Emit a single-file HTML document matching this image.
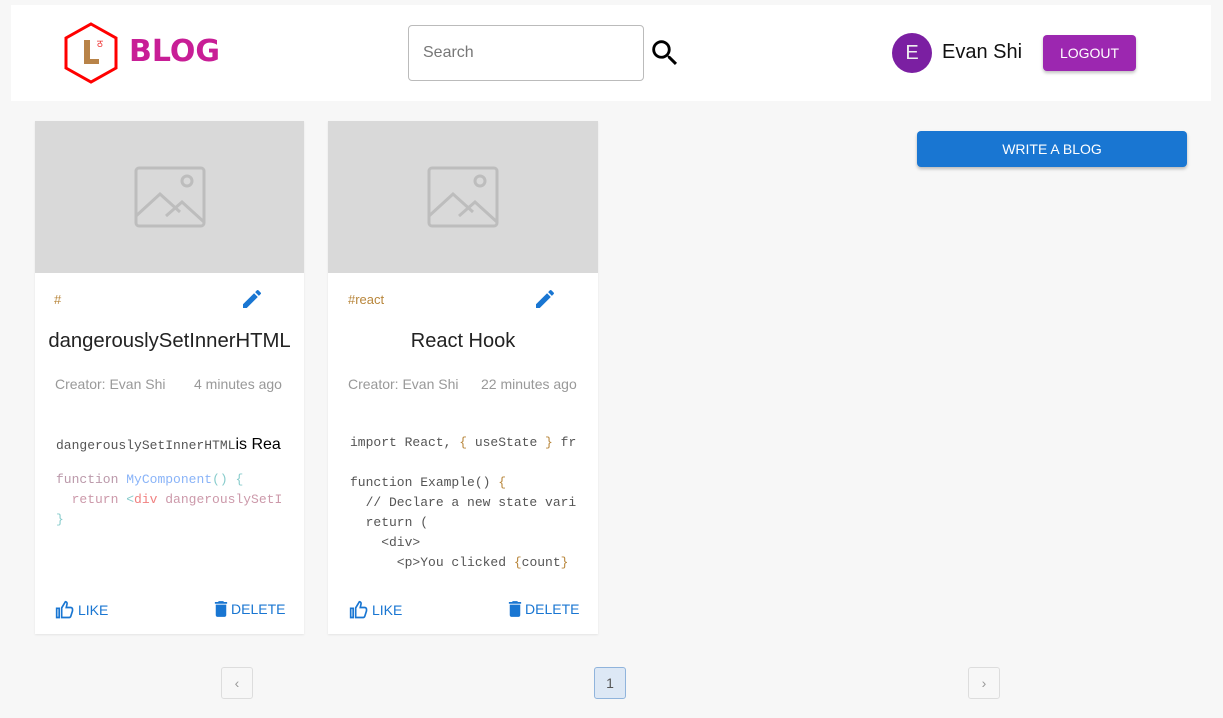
<!DOCTYPE html>
<html><head><style>
body{margin:0;background:#f7f7f7;font-family:"Liberation Sans",Arial,sans-serif;width:1223px;height:718px;position:relative;overflow:hidden}
.abs{position:absolute}
.hdr{left:11px;top:5px;width:1200px;height:96px;background:#fff}
.card{top:121px;height:513px;background:#fff;width:270px;box-shadow:0 1px 2px rgba(0,0,0,.08)}
.img{left:0;top:0;width:100%;height:152px;background:#d9d9d9}
.tag{font-size:13px;color:#b8863b}
.title{font-size:20px;color:#222;width:100%;text-align:center}
.meta{font-size:14px;color:#999}
pre{margin:0;font-family:"Liberation Mono",monospace;font-size:13px;line-height:20px;color:#555;overflow:hidden}
.act{font-size:14px;color:#1976d2;display:flex;align-items:center;gap:3px}
.pg{width:30px;height:30px;border:1px solid #ddd;border-radius:3px;top:667px;color:#999;font-size:14px;display:flex;align-items:center;justify-content:center;background:#f7f7f7}
</style></head><body>
<div class="abs hdr"></div>
<svg class="abs" style="left:63px;top:22px" width="56" height="62" viewBox="0 0 56 62"><polygon points="28,2 53,16 53,46 28,60 3,46 3,16" fill="none" stroke="#f00" stroke-width="3"/><path d="M21 18v24h15v-5h-9V18z" fill="#b88348"/><text x="34" y="25" font-size="10" fill="#e33">ठ</text></svg>
<div class="abs" style="left:129px;top:34px;font-size:30px;font-weight:bold;color:#c81e96;font-family:'DejaVu Sans',sans-serif;letter-spacing:0px">BLOG</div>
<div class="abs" style="left:408px;top:25px;width:236px;height:56px;border:1px solid #bbb;border-radius:4px;box-sizing:border-box;padding:18px 14px;font-size:16px;color:#777">Search</div>
<svg class="abs" style="left:648px;top:36px" width="34" height="34" viewBox="0 0 24 24"><path d="M15.5 14h-.79l-.28-.27A6.47 6.47 0 0016 9.5 6.5 6.5 0 109.5 16c1.61 0 3.09-.59 4.230-1.57l.27.28v.79l5 4.99L20.49 19l-4.99-5zm-6 0C7.01 14 5 11.990 5 9.5S7.01 5 9.5 5 14 7.01 14 9.5 11.99 14 9.5 14z"/></svg>
<div class="abs" style="left:892px;top:33px;width:40px;height:40px;border-radius:50%;background:#7b1fa2;color:#eee;font-size:20px;display:flex;align-items:center;justify-content:center">E</div>
<div class="abs" style="left:942px;top:41px;font-size:20px;color:#111">Evan Shi</div>
<div class="abs" style="left:1043px;top:35px;width:93px;height:36px;background:#9c27b0;color:#fff;border-radius:4px;font-size:14px;display:flex;align-items:center;justify-content:center;box-shadow:0 2px 3px rgba(0,0,0,.25)">LOGOUT</div>
<div class="abs" style="left:917px;top:131px;width:270px;height:36px;background:#1976d2;color:#fff;border-radius:4px;font-size:14px;display:flex;align-items:center;justify-content:center;box-shadow:0 2px 3px rgba(0,0,0,.25)">WRITE A BLOG</div>

<div class="abs card" style="left:35px;width:269px">
 <div class="abs img"><svg class="abs" style="left:99px;top:45px" width="72" height="62" viewBox="0 0 72 62"><rect x="2" y="2" width="68" height="58" rx="3" fill="none" stroke="#bdbdbd" stroke-width="3"/><circle cx="53" cy="15" r="5" fill="none" stroke="#bdbdbd" stroke-width="3"/><path d="M2 50l24-22 20 18M32 50l16-14 22 20" fill="none" stroke="#bdbdbd" stroke-width="3"/></svg></div>
 <div class="abs tag" style="left:19px;top:171px">#</div>
 <svg class="abs" style="left:205px;top:166px" width="24" height="24" viewBox="0 0 24 24"><path fill="#1976d2" d="M3 17.25V21h3.75L17.81 9.94l-3.75-3.75L3 17.25zM20.71 7.04a1 1 0 000-1.41l-2.34-2.34a1 1 0 00-1.41 0l-1.83 1.83 3.75 3.75 1.83-1.83z"/></svg>
 <div class="abs title" style="top:209px;font-size:20.3px">dangerouslySetInnerHTML</div>
 <div class="abs meta" style="left:20px;top:255px">Creator: Evan Shi</div>
 <div class="abs meta" style="left:159px;top:255px">4 minutes ago</div>
 <pre class="abs" style="left:21px;top:314px;width:228px"><span style="color:#555">dangerouslySetInnerHTML</span><span style="font-family:'Liberation Sans';font-size:16px;line-height:20px;color:#000">is Rea</span></pre>
 <pre class="abs" style="left:21px;top:349px;width:228px"><span style="color:#c9a"><span style="color:#b9a">function</span> <span style="color:#8ab4f8">MyComponent</span><span style="color:#8cc">() {</span>
  return <span style="color:#8cc">&lt;</span><span style="color:#f08080">div</span> dangerouslySetI
<span style="color:#8cc">}</span></span></pre>
 <div class="abs act" style="left:20px;top:479px"><svg width="20" height="20" viewBox="0 0 24 24"><path fill="none" stroke="#1976d2" stroke-width="2" d="M2 10h3v11H2zM8 21h9c1 0 1.6-.6 1.9-1.4l2.1-6.6V11c0-1-1-2-2-2h-5.5l1-4.5c.2-1-.7-2.5-2-2.5L8 9.5z"/></svg>LIKE</div>
 <div class="abs act" style="left:179px;top:479px"><svg width="14" height="18" viewBox="4 3 16 18"><path fill="#1976d2" d="M6 19c0 1.1.9 2 2 2h8c1.1 0 2-.9 2-2V7H6v12zM19 4h-3.5l-1-1h-5l-1 1H5v2h14V4z"/></svg>DELETE</div>
</div>

<div class="abs card" style="left:328px">
 <div class="abs img"><svg class="abs" style="left:99px;top:45px" width="72" height="62" viewBox="0 0 72 62"><rect x="2" y="2" width="68" height="58" rx="3" fill="none" stroke="#bdbdbd" stroke-width="3"/><circle cx="53" cy="15" r="5" fill="none" stroke="#bdbdbd" stroke-width="3"/><path d="M2 50l24-22 20 18M32 50l16-14 22 20" fill="none" stroke="#bdbdbd" stroke-width="3"/></svg></div>
 <div class="abs tag" style="left:20px;top:171px">#react</div>
 <svg class="abs" style="left:205px;top:166px" width="24" height="24" viewBox="0 0 24 24"><path fill="#1976d2" d="M3 17.25V21h3.75L17.81 9.94l-3.75-3.75L3 17.25zM20.71 7.04a1 1 0 000-1.41l-2.34-2.34a1 1 0 00-1.41 0l-1.83 1.83 3.75 3.75 1.83-1.83z"/></svg>
 <div class="abs title" style="top:209px">React Hook</div>
 <div class="abs meta" style="left:20px;top:255px">Creator: Evan Shi</div>
 <div class="abs meta" style="left:153px;top:255px">22 minutes ago</div>
 <pre class="abs" style="left:22px;top:312px;width:226px">import React, <span style="color:#b8863b">{</span> useState <span style="color:#b8863b">}</span> fr

function Example() <span style="color:#b8863b">{</span>
  // Declare a new state vari
  return (
    &lt;div&gt;
      &lt;p&gt;You clicked <span style="color:#b8863b">{</span>count<span style="color:#b8863b">}</span></pre>
 <div class="abs act" style="left:21px;top:479px"><svg width="20" height="20" viewBox="0 0 24 24"><path fill="none" stroke="#1976d2" stroke-width="2" d="M2 10h3v11H2zM8 21h9c1 0 1.6-.6 1.9-1.4l2.1-6.6V11c0-1-1-2-2-2h-5.5l1-4.5c.2-1-.7-2.5-2-2.5L8 9.5z"/></svg>LIKE</div>
 <div class="abs act" style="left:180px;top:479px"><svg width="14" height="18" viewBox="4 3 16 18"><path fill="#1976d2" d="M6 19c0 1.1.9 2 2 2h8c1.1 0 2-.9 2-2V7H6v12zM19 4h-3.5l-1-1h-5l-1 1H5v2h14V4z"/></svg>DELETE</div>
</div>

<div class="abs pg" style="left:221px">‹</div>
<div class="abs pg" style="left:594px;background:#dde8f5;border-color:#90b4dc;color:#555">1</div>
<div class="abs pg" style="left:968px">›</div>
</body></html>
